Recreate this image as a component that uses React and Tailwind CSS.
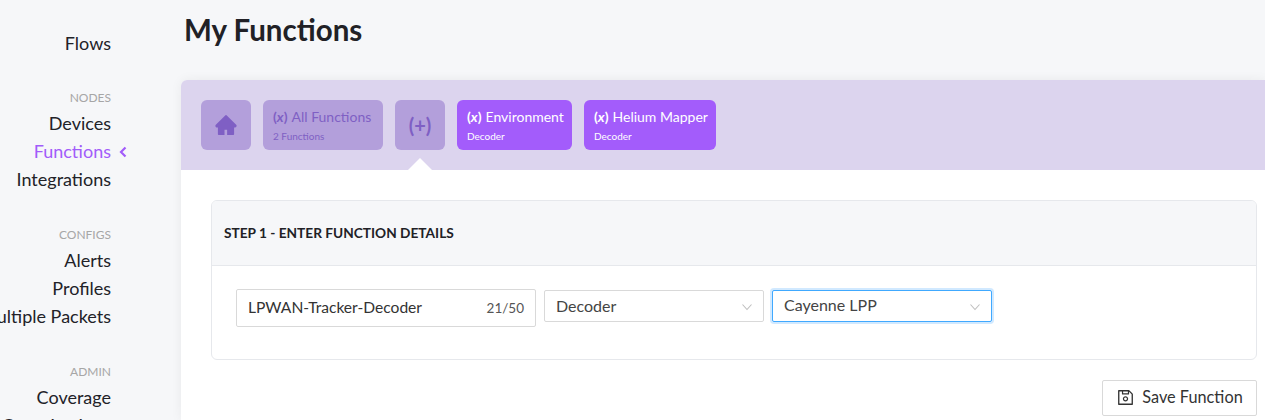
import { AiFillHome, AiOutlineSave } from "react-icons/ai";

const font = { fontFamily: '"Lato", "Open Sans", sans-serif' };

function NavSection({ label, items, className }) {
  return (
    <div className={`flex flex-col items-end ${className}`}>
      {label && (
        <div className="h-[22px] text-[12px] leading-[22px] text-[#a6a6a6]">{label}</div>
      )}
      {items.map((item) => (
        <div
          key={item}
          className={`relative h-7 text-[18px] leading-7 ${item === "Functions" ? "text-[#a25cfa]" : "text-[#222228]"}`}
        >
          {item}
          {item === "Functions" && (
            <svg className="absolute left-full top-[9px] ml-[8px]" width="8" height="12" viewBox="0 0 8 12" fill="none">
              <path d="M6.5 1.5 2 6l4.5 4.500" stroke="#a25cfa" strokeWidth="2.2" />
            </svg>
          )}
        </div>
      ))}
    </div>
  );
}

function Sidebar() {
  return (
    <div className="w-[181px] shrink-0 pr-[70px] pt-[29px] whitespace-nowrap">
      <NavSection items={["Flows"]} />
      <NavSection className="mt-[30px]" label="NODES" items={["Devices", "Functions", "Integrations"]} />
      <NavSection className="mt-[31px]" label="CONFIGS" items={["Alerts", "Profiles", "Multiple Packets"]} />
      <NavSection className="mt-[31px]" label="ADMIN" items={["Coverage", "Organizations"]} />
    </div>
  );
}

function FunctionIcon({ className }) {
  return <span className={`font-bold ${className}`}>(<i>x</i>)</span>;
}

function FunctionTab({ title, subtitle, width, active }) {
  return (
    <div
      className={`h-[50px] rounded-md pl-[10px] pt-[7px] ${width} ${active ? "bg-[#a35cfb] text-white" : "bg-[#b39fdb] text-[#7f5fc4]"}`}
    >
      <div className="text-[14px] leading-5 whitespace-nowrap">
        <FunctionIcon className="mr-[4px] text-[14px]" />
        {title}
      </div>
      <div className="mt-[1px] text-[10px] leading-4">{subtitle}</div>
    </div>
  );
}

function SelectBox({ value, focused, width }) {
  return (
    <div
      className={`flex h-8 items-center justify-between rounded-[2px] border bg-white pl-[11px] pr-[11px] text-[16px] text-[#444] ${width} ${focused ? "border-[#40a9ff] shadow-[0_0_0_2px_rgba(24,144,255,0.2)]" : "border-[#d9d9d9]"}`}
    >
      <span className={focused ? "-mt-[2px]" : "-mt-[1px]"}>{value}</span>
      <svg className="mt-[2px]" width="10" height="8" viewBox="0 0 10 8" fill="none">
        <path d="M0.500 1.500 5 6.500l4.500-5" stroke="#bfbfbf" strokeWidth="1.1" />
      </svg>
    </div>
  );
}

export default function App() {
  return (
    <div className="flex h-[420px] overflow-hidden bg-[#f6f7f9]" style={font}>
      <Sidebar />
      <div className="min-w-0 flex-1">
        <h1 className="h-20 pl-[3px] pt-[10px] text-[29.500px] leading-10 font-bold text-[#212126]">My Functions</h1>
        <div className="h-[340px] rounded-tl-md bg-white shadow-[0_0_12px_rgba(0,0,0,0.06)]">
          <div className="relative flex h-[90px] items-center gap-3 rounded-tl-md bg-[#dcd4ee] pl-5">
            <div className="flex h-[50px] w-[50px] items-center justify-center rounded-md bg-[#b39fdb] text-[#7f5fc4]">
              <AiFillHome size={24} />
            </div>
            <FunctionTab title="All Functions" subtitle="2 Functions" width="w-[120px]" />
            <div className="flex h-[50px] w-[50px] items-center justify-center rounded-md bg-[#b39fdb] text-[20px] font-bold text-[#7f5fc4]">
              (+)
            </div>
            <FunctionTab title="Environment" subtitle="Decoder" width="w-[115px]" active />
            <FunctionTab title="Helium Mapper" subtitle="Decoder" width="w-[132px]" active />
            <div className="absolute bottom-0 left-[227px] h-0 w-0 border-x-[12px] border-b-[12px] border-x-transparent border-b-white" />
          </div>
          <div className="pl-[30px] pr-2 pt-[30px]">
            <div className="overflow-hidden rounded-md border border-[#e6e8ec]">
              <div className="flex h-[65px] items-center border-b border-[#e6e8ec] bg-[#f6f7f9] pl-3 text-[13.700px] font-bold text-[#212126]">
                STEP 1 - ENTER FUNCTION DETAILS
              </div>
              <div className="flex h-[93px] items-start gap-2 pl-6 pt-6">
                <div className="-mt-[1px] flex h-[38px] w-[300px] items-center justify-between rounded-[2px] border border-[#d9d9d9] bg-white px-[11px] text-[#333]">
                  <span className="text-[15.600px]">LPWAN-Tracker-Decoder</span>
                  <span className="text-[13.500px] text-[#555]">21/50</span>
                </div>
                <SelectBox value="Decoder" width="w-[220px]" />
                <SelectBox value="Cayenne LPP" width="w-[220px]" focused />
              </div>
            </div>
            <div className="mt-5 flex justify-end">
              <button className="flex h-9 w-[155px] items-center justify-center gap-[7px] rounded-[2px] border border-[#d9d9d9] bg-white pb-[2px] text-[16.300px] text-[#333]">
                <AiOutlineSave size={19} />
                Save Function
              </button>
            </div>
          </div>
        </div>
      </div>
    </div>
  );
}
